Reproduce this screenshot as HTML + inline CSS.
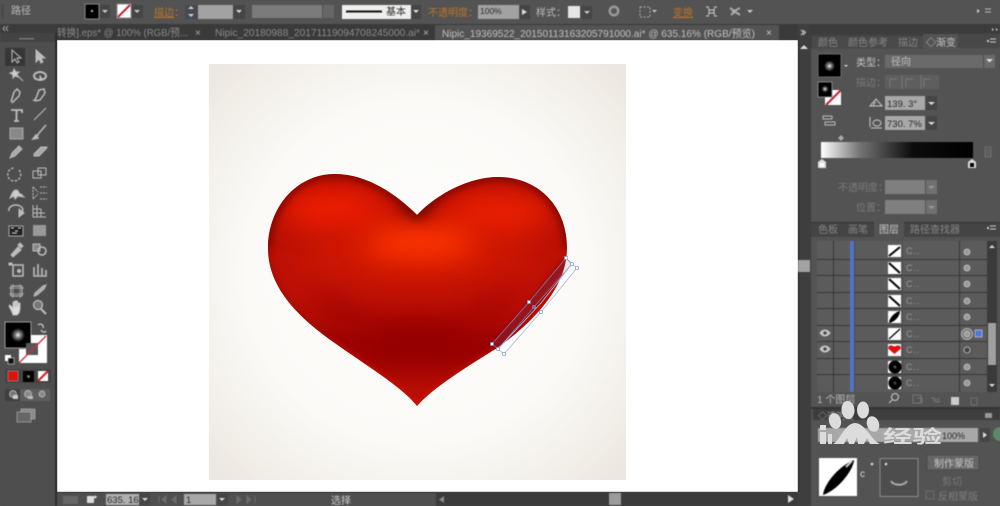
<!DOCTYPE html>
<html><head><meta charset="utf-8"><style>
html,body{margin:0;padding:0;background:#535353;width:1000px;height:506px;overflow:hidden}
svg{display:block}
text{font-family:"Liberation Sans","Noto Sans CJK SC",sans-serif;font-size:10px}
.o{fill:#bd7428}.d{fill:#7a7a7a}.m{fill:#2a2a2a}.l{fill:#bcbcbc}
</style></head><body>
<svg width="1000" height="506" viewBox="0 0 1000 506" xmlns="http://www.w3.org/2000/svg">
<defs>
<radialGradient id="bg" gradientUnits="userSpaceOnUse" cx="417" cy="272" r="285"><stop offset="0" stop-color="#fffefd"/><stop offset=".6" stop-color="#fbfaf7"/><stop offset=".85" stop-color="#f2efe9"/><stop offset="1" stop-color="#ece7e0"/></radialGradient>
<radialGradient id="dot"><stop offset="0" stop-color="#fff"/><stop offset=".35" stop-color="#888"/><stop offset="1" stop-color="#000"/></radialGradient>
<linearGradient id="gbar"><stop offset="0" stop-color="#fff"/><stop offset=".25" stop-color="#777"/><stop offset=".6" stop-color="#0c0c0c"/><stop offset="1" stop-color="#000"/></linearGradient>
<filter id="b3" x="-50%" y="-50%" width="200%" height="200%" color-interpolation-filters="sRGB"><feGaussianBlur stdDeviation="3"/></filter>
<filter id="b4" x="-50%" y="-50%" width="200%" height="200%" color-interpolation-filters="sRGB"><feGaussianBlur stdDeviation="4"/></filter>
<filter id="b8" x="-50%" y="-50%" width="200%" height="200%" color-interpolation-filters="sRGB"><feGaussianBlur stdDeviation="8"/></filter>
<filter id="b14" x="-60%" y="-80%" width="220%" height="260%" color-interpolation-filters="sRGB"><feGaussianBlur stdDeviation="14"/></filter>
<filter id="b22" x="-60%" y="-100%" width="220%" height="300%" color-interpolation-filters="sRGB"><feGaussianBlur stdDeviation="22"/></filter>
<filter id="s" x="0" y="0" width="100%" height="100%" color-interpolation-filters="sRGB"><feGaussianBlur stdDeviation=".55"/></filter>
<clipPath id="hc"><path d="M417,215 C395,193 366,174 335,174 C296,174 268,208 268,248 C268,287 297,316 332,341 C367,366 402,387 417,406 C431,390 458,372 497,348 C525,328 567,292 567,248 C567,206 538,177 498,177 C470,177 438,193 417,215 Z"/></clipPath>
</defs>

<!-- canvas -->
<rect x="57" y="40" width="741" height="452" fill="#fff"/>
<rect x="209" y="64" width="417" height="416" fill="url(#bg)"/>

<!-- heart -->
<g clip-path="url(#hc)">
<rect x="260" y="165" width="315" height="250" fill="#bc1006"/>
<ellipse cx="417" cy="345" rx="115" ry="30" fill="#960000" filter="url(#b14)"/>
<ellipse cx="340" cy="312" rx="38" ry="14" fill="#a40602" filter="url(#b14)" transform="rotate(35 340 312)"/>
<ellipse cx="492" cy="306" rx="34" ry="14" fill="#a80602" filter="url(#b14)" transform="rotate(-35 492 306)"/>
<ellipse cx="417" cy="252" rx="120" ry="24" fill="#da1c00" filter="url(#b22)"/>
<ellipse cx="332" cy="208" rx="52" ry="17" fill="#f42000" filter="url(#b14)"/>
<ellipse cx="500" cy="212" rx="52" ry="17" fill="#f02200" filter="url(#b14)"/>
<ellipse cx="420" cy="242" rx="56" ry="17" fill="#ff3600" filter="url(#b14)"/>
<path d="M417,215 C395,193 366,174 335,174 C296,174 268,208 268,248" fill="none" stroke="#780700" stroke-width="7" filter="url(#b4)"/>
<path d="M417,215 C438,193 470,177 498,177 C538,177 567,206 567,248" fill="none" stroke="#780700" stroke-width="7" filter="url(#b4)"/>
<ellipse cx="417" cy="205" rx="15" ry="13" fill="#800a00" filter="url(#b8)"/>
<path d="M268,248 C268,287 297,316 332,341" fill="none" stroke="#960e04" stroke-width="4" filter="url(#b3)"/>
<path d="M332,341 C367,366 402,387 417,406 C431,390 458,372 497,348" fill="none" stroke="#dc1404" stroke-width="3" filter="url(#b3)" opacity=".7"/>
<path d="M497,352 C525,335 552,305 567,265 L572,300 L510,365 Z" fill="#ee0000" filter="url(#b3)"/>
<path d="M495,347 C520,322 535,300 566,262" fill="none" stroke="#8e0000" stroke-width="6" filter="url(#b3)"/>
</g>
<!-- selection -->
<path d="M566,258 L529,302 L492,344 L498,349 L534,307 L572,264 Z" fill="#8080b8" fill-opacity=".14" stroke="#7478b0" stroke-width=".8"/>
<g fill="none" stroke="#a9bedd" stroke-width=".9">
<path d="M572,264 L577,268 L541,312 L504,354 L498,349"/>
<path d="M572,264 L541,303 L498,349"/>
</g>
<g fill="#fff" stroke="#7f94c0" stroke-width=".7">
<rect x="564.500" y="256.500" width="3" height="3"/><rect x="490.500" y="342.500" width="3" height="3"/><rect x="527.500" y="300.500" width="3" height="3"/>
<circle cx="572" cy="264" r="1.700"/><circle cx="577" cy="268" r="1.700"/><circle cx="541" cy="312" r="1.700"/><circle cx="504" cy="354" r="1.700"/><circle cx="498" cy="349" r="1.700"/><circle cx="534" cy="307" r="1.500" fill="#c0507a"/>
</g>

<g filter="url(#s)">
<!-- top bar -->
<rect x="0" y="0" width="1000" height="24" fill="#535353"/>
<rect x="2" y="4" width="1" height="15" fill="#3f3f3f"/>
<text x="11" y="14" class="l">路径</text>
<rect x="85" y="4" width="14" height="15" fill="#000" stroke="#8a8a8a"/><rect x="91" y="10" width="2" height="2" fill="#bbb"/>
<rect x="100" y="5" width="10" height="13" fill="#454545"/><path d="M102,10h6l-3,3z" fill="#ccc"/>
<rect x="117" y="4" width="14" height="14" fill="#fff" stroke="#8a8a8a"/><path d="M118,17L130,5" stroke="#c02030" stroke-width="2"/>
<rect x="132" y="5" width="11" height="13" fill="#454545"/><path d="M134,10h6l-3,3z" fill="#ccc"/>
<text x="154" y="16" class="o" style="text-decoration:underline">描边</text><text x="174" y="16" class="o">：</text>
<rect x="185" y="5" width="13" height="14" fill="#454a50"/><path d="M188,9h6l-3,-3zM188,14h6l-3,3z" fill="#ccc"/>
<rect x="198" y="5" width="35" height="14" fill="#a2a2a2"/><rect x="233" y="5" width="12" height="14" fill="#454545"/><path d="M236,10h6l-3,3z" fill="#ddd"/>
<rect x="252" y="5" width="70" height="13" fill="#7b7b7b"/><rect x="323" y="5" width="11" height="13" fill="#666"/>
<rect x="342" y="5" width="75" height="14" fill="#eeeeec"/><rect x="346" y="10.500" width="36" height="2" fill="#111"/><text x="386" y="15" class="m">基本</text>
<rect x="411" y="5" width="10" height="14" fill="#454545"/><path d="M413,10h6l-3,3z" fill="#ddd"/>
<text x="428" y="16" class="o">不透明度：</text>
<rect x="478" y="5" width="41" height="14" fill="#a2a2a2"/><text x="480" y="14" class="m" style="font-size:8.500px">100%</text>
<rect x="520" y="5" width="10" height="14" fill="#454545"/><path d="M522,9l5,3l-5,3z" fill="#ddd"/>
<text x="536" y="16" class="l">样式：</text>
<rect x="568" y="6" width="12" height="12" fill="#e6e6e6"/><rect x="581" y="6" width="11" height="13" fill="#454545"/><path d="M584,11h6l-3,3z" fill="#ccc"/>
<circle cx="614" cy="11" r="5.500" fill="#999"/><circle cx="614" cy="11" r="3" fill="#555"/>
<rect x="640" y="7" width="10" height="10" fill="none" stroke="#aaa" stroke-dasharray="2 1.500"/><path d="M652,10h5l-2.500,2.500z" fill="#ccc"/>
<text x="673" y="16" class="o" style="text-decoration:underline">变换</text>
<path d="M706,7h3M714,7h3M706,16h3M714,16h3M708,8l1.500,2M715,8l-1.500,2M708,15l1.500,-2M715,15l-1.500,-2M709,10h5v3h-5z" stroke="#ccc" fill="none"/>
<path d="M730,8l10,7M740,8l-8,4M731,15l4,-3" stroke="#aaa" stroke-width="2" fill="none"/><path d="M747,10h6l-3,3z" fill="#ccc"/>
<path d="M985,9h6M985,12h6" stroke="#bbb" fill="none"/><path d="M977,9l3,2l-3,2z" fill="#ccc"/>

<!-- tab bar -->
<rect x="0" y="24" width="57" height="9" fill="#3c3c3c"/>
<path d="M5,26l-2,2.500l2,2.500M8,26l-2,2.500l2,2.500" stroke="#aaa" fill="none"/>
<rect x="57" y="24" width="741" height="16" fill="#3a3a3a"/>
<text x="57" y="36" fill="#8a8a8a" textLength="131" lengthAdjust="spacingAndGlyphs" style="font-size:10.500px">转换].eps* @ 100% (RGB/预...</text>
<text x="195" y="36" fill="#aaa">×</text>
<text x="215" y="36" fill="#8a8a8a" textLength="205" lengthAdjust="spacingAndGlyphs" style="font-size:10.500px">Nipic_20180988_20171119094708245000.ai*</text>
<text x="423" y="36" fill="#bbb">×</text>
<rect x="435" y="25" width="344" height="15" fill="#535353"/>
<text x="442" y="37" fill="#c0c0c0" textLength="313" lengthAdjust="spacingAndGlyphs" style="font-size:10.500px">Nipic_19369522_20150113163205791000.ai* @ 635.16% (RGB/预览)</text>
<text x="766" y="36" fill="#ccc">×</text>
<path d="M798,29l2,2.500l-2,2.500M801,29l2,2.500l-2,2.500" stroke="#bbb" fill="none"/>

<!-- left tools -->
<rect x="0" y="33" width="55" height="473" fill="#4e4e4e"/>
<rect x="55" y="33" width="2" height="473" fill="#2c2c2c"/>
<rect x="0" y="33" width="55" height="9" fill="#434343"/>
<rect x="19" y="38" width="15" height="1.500" fill="#777"/>
<rect x="5" y="48" width="20" height="18" fill="#363636"/>
<g fill="#bdbdbd" stroke="#bdbdbd" stroke-width="1">
<path d="M12,50v12l3,-3l2,4l2,-1l-2,-4h4z" fill="none"/>
<path d="M36,50v12l3,-3l2,4l2,-1l-2,-4h4z"/>
<path d="M10,73l3,-1l1,-3l2,3l3,0l-2,2l1,3l-3,-1l-2,2l0,-3zM17,75l6,6" fill="#ccc"/>
<ellipse cx="40" cy="76" rx="6" ry="4" fill="none" stroke-width="2"/><path d="M40,76l3,4l-3,0z"/>
<path d="M11,102l3,-10l3,-3l3,3l-1,4l-7,7" fill="none" stroke-width="1.500"/>
<path d="M33,100c2,2 4,-4 6,-10l5,-1l1,4l-5,7l-5,1" fill="none" stroke-width="1.500"/>
<path d="M11,110h11v3M16.500,110v11M14,121h5" fill="none" stroke-width="1.800"/>
<path d="M34,120l12,-12" fill="none"/>
<rect x="10" y="128" width="13" height="11" fill="#888" stroke="#aaa"/>
<path d="M34,138c3,-1 4,-3 5,-5l7,-8M33,139l5,-1l-2,-3z" stroke-width="1.500" fill="none"/>
<path d="M10,158l2,-5l7,-7l3,3l-7,7z" fill="#aaa"/>
<path d="M34,154l7,-7h6l-1,2l-7,7h-5z" fill="#aaa"/>
<path d="M19,170a6.500,6.500 0 1 1 -4,-2" fill="none" stroke-dasharray="2.500 1.500" stroke-width="1.300"/>
<rect x="33" y="171" width="8" height="7" fill="none"/><rect x="38" y="168" width="8" height="7" fill="none"/>
<path d="M10,198c2,-4 3,-8 6,-8c4,0 2,5 5,4l3,3l-6,-1l-3,3l-1,-3z" fill="#ccc"/>
<path d="M33,187v12M33,187l5,5M33,199l5,-5M40,187h7M40,193h7M40,199h7" fill="none" stroke-dasharray="2 1"/>
<path d="M9,211a7,5 0 1 1 11,3" fill="none" stroke-width="1.500"/><path d="M19,209v8l5,-4z"/>
<path d="M33,205v12h13M33,209h8M33,213h12M37,205v12M41,209v8" fill="none" stroke-width="1"/>
</g>
<rect x="9" y="226" width="14" height="10" fill="#222" stroke="#aaa"/><path d="M11,228h3M15,231h3M12,233h5M18,228h3" stroke="#ddd" fill="none"/>
<rect x="33" y="225" width="13" height="11" fill="#999"/>
<g fill="#bdbdbd" stroke="#bdbdbd">
<path d="M11,255l7,-8l3,3l-8,7zM18,245l2,-2l3,3l-2,2z"/>
<rect x="33" y="244" width="7" height="7" fill="#888"/><circle cx="42" cy="251" r="4" fill="none" stroke-width="1.500"/>
<rect x="13" y="265" width="10" height="11" fill="none" stroke-width="1.500"/><circle cx="19" cy="271" r="1.500"/><rect x="9" y="263" width="3" height="2"/>
<path d="M34,275v-8M38,275v-11M42,275v-7M46,275v-5M33,276h14" fill="none" stroke-width="1.600"/>
<rect x="11" y="286" width="11" height="10" fill="none"/><path d="M9,288h15M9,294h15M13,284v14M20,284v14" fill="none" stroke-width=".7"/>
<path d="M34,296l1,-3l8,-7l3,-1l-2,4l-7,6z" fill="#aaa"/>
<path d="M12,312l-3,-6l1,-1l3,3v-6h1.500v5v-6h1.500v6v-6h1.500v6l1,-4h1.500v6l-1,4l-2,2h-4z" fill="#ddd"/>
<circle cx="38" cy="305" r="4.500" fill="#777" stroke-width="1.300"/><path d="M41,309l5,5" stroke-width="2"/>
</g>
<rect x="5" y="322" width="26" height="26" fill="#000" stroke="#9a9a9a"/>
<circle cx="18" cy="335" r="7" fill="url(#dot)"/>
<path d="M31,335h16v28h-28v-14h12z" fill="#fff"/>
<rect x="26" y="343" width="12" height="12" fill="#555"/>
<path d="M19,363L46,336" stroke="#c83040" stroke-width="1.300" fill="none"/>
<path d="M38,325c3,-2 6,0 5,3M46,331c-1,2 -4,1 -5,-1" stroke="#ccc" fill="none" stroke-width="1.300"/>
<rect x="5" y="355" width="6" height="6" fill="#fff"/><rect x="8" y="358" width="6" height="6" fill="#111" stroke="#ddd" stroke-width=".6"/>
<rect x="5" y="369" width="46" height="14" fill="#444"/>
<rect x="8" y="371" width="10" height="10" fill="#dc1208" stroke="#aaa" stroke-width=".5"/>
<rect x="23" y="371" width="11" height="11" fill="#000"/><circle cx="28.500" cy="376.500" r="2" fill="url(#dot)"/>
<rect x="38" y="371" width="10" height="10" fill="#fff"/><path d="M38,381l10,-10" stroke="#c82020" stroke-width="2" fill="none"/>
<rect x="5" y="389" width="45" height="12" fill="#5e5e5e"/><rect x="5" y="389" width="15" height="12" fill="#3f3f3f"/>
<circle cx="13" cy="394" r="3.500" fill="#777" stroke="#ccc" stroke-width=".7"/><rect x="13" y="395" width="5" height="4" fill="#ccc"/>
<circle cx="28" cy="394" r="3.500" fill="#888" stroke="#ccc" stroke-width=".7"/><rect x="28" y="396" width="5" height="3" fill="#bbb"/>
<circle cx="42" cy="394" r="3" fill="#888" stroke="#ccc" stroke-width=".7"/>
<rect x="21" y="409" width="14" height="10" fill="#888" stroke="#bbb" stroke-width=".6"/><rect x="17" y="412" width="14" height="10" fill="#666" stroke="#bbb" stroke-width=".6"/>

<!-- bottom bar -->
<rect x="57" y="492" width="741" height="14" fill="#4f4f4f"/>
<rect x="57" y="492" width="741" height="1" fill="#3c3c3c"/>
<rect x="63" y="496" width="15" height="8" fill="#666"/>
<path d="M87,496h7v7h-7zM90,499l5,-3v-1l2,2l-2,2v-1" fill="#ddd"/>
<rect x="106" y="494" width="33" height="11" fill="#b0b0b0"/><text x="107" y="503" class="m" style="font-size:9.500px">635. 16</text>
<rect x="140" y="494" width="10" height="11" fill="#454545"/><path d="M142,498h6l-3,3z" fill="#ddd"/>
<path d="M159,496v7M166,496l-4,3.500l4,3.500zM176,496l-4,3.500l4,3.500zM237,496l4,3.500l-4,3.500zM247,496l4,3.500l-4,3.500zM255,496v7" fill="#6a6a6a" stroke="#6a6a6a"/>
<rect x="184" y="494" width="32" height="11" fill="#a8a8a8"/><text x="186" y="503" class="m" style="font-size:9.500px">1</text>
<rect x="217" y="494" width="11" height="11" fill="#454545"/><path d="M219,498h6l-3,3z" fill="#ddd"/>
<text x="331" y="504" fill="#cccccc">选择</text>
<rect x="436" y="492" width="362" height="14" fill="#3b3b3b"/>
<path d="M444,496l-5,3.500l5,3.500z" fill="#8a8a8a"/>
<rect x="609" y="493" width="12" height="12" fill="#9b9b9b"/>
<path d="M788,495l6,4l-6,4z" fill="#ddd"/>

<!-- right strip -->
<rect x="798" y="24" width="13" height="482" fill="#3e3e3e"/>
<rect x="798" y="40" width="1" height="452" fill="#2c2c2c"/>
<path d="M801,30l2.500,2.500l-2.500,2.500M803,30l2.500,2.500l-2.500,2.500" stroke="#ccc" fill="none"/>
<path d="M800,49l4,-4l4,4z" fill="#ddd"/>
<rect x="798" y="260" width="12" height="12" fill="#a2a2a2"/>

<!-- gradient panel -->
<rect x="811" y="24" width="189" height="9" fill="#3c3c3c"/>
<path d="M992,28l2,1.500l-2,1.500zM996,28l2,1.500l-2,1.500z" fill="#ccc"/>
<rect x="811" y="33" width="189" height="16" fill="#3f3f3f"/>
<rect x="923" y="34" width="77" height="15" fill="#484848"/>
<rect x="811" y="48" width="189" height="174" fill="#535353"/>
<rect x="812" y="36" width="111" height="13" fill="#4a4a4a"/>
<rect x="923" y="34" width="35" height="15" fill="#535353"/>
<text x="818" y="46" fill="#858585">颜色</text><text x="848" y="46" fill="#858585">颜色参考</text><text x="898" y="46" fill="#858585">描边</text>
<text x="926" y="46" fill="#c4c4c4">◇渐变</text>
<path d="M990,39h6M990,42h6" stroke="#ccc" fill="none"/><rect x="987" y="40" width="2" height="2" fill="#ccc"/>
<rect x="818" y="54" width="23" height="23" fill="#000" stroke="#6a6a6a"/><circle cx="829.500" cy="66" r="5.500" fill="url(#dot)"/>
<path d="M844,65h4l-2,2z" fill="#ddd"/>
<rect x="825" y="90" width="16" height="15" fill="#fff"/><path d="M826,105l15,-15" stroke="#c02030" stroke-width="2" fill="none"/>
<rect x="818" y="82" width="14" height="15" fill="#000" stroke="#999" stroke-width=".8"/><circle cx="825" cy="89" r="3.500" fill="url(#dot)"/>
<path d="M823,116h9v3h-9zM825,122h10v3h-10z" fill="none" stroke="#bbb"/>
<text x="856" y="66" fill="#c4c4c4">类型：</text>
<rect x="885" y="55" width="110" height="13" fill="#6a6a6a"/><text x="891" y="65" fill="#c0c0c0">径向</text>
<rect x="983" y="55" width="1" height="13" fill="#4a4a4a"/><path d="M986,59h7l-3.500,3.500z" fill="#ddd"/>
<text x="856" y="86" class="d">描边：</text>
<rect x="885" y="75" width="54" height="14" fill="#5e5e5e"/><path d="M890,87v-8h7M906,87v-8h7M924,87v-8h7M902,75v14M921,75v14" stroke="#7a7a7a" fill="none"/>
<path d="M870,106h12l-6,-7zM874,106a3,3 0 0 1 2,-4" fill="none" stroke="#ccc"/>
<rect x="885" y="96" width="40" height="14" fill="#a8a8a8"/><text x="887" y="107" class="m" style="font-size:9.500px">139. 3°</text>
<rect x="926" y="96" width="11" height="14" fill="#454545"/><path d="M928,102h7l-3.500,3z" fill="#ddd"/>
<path d="M870,117v10M873,123a4,3 0 1 1 8,0a4,3 0 1 1 -8,0M871,128h11" fill="none" stroke="#ccc"/>
<rect x="885" y="116" width="40" height="14" fill="#a8a8a8"/><text x="887" y="127" class="m" style="font-size:9.500px">730. 7%</text>
<rect x="926" y="116" width="11" height="14" fill="#454545"/><path d="M928,122h7l-3.500,3z" fill="#ddd"/>
<path d="M841,135l3,3l-3,3l-3,-3z" fill="#aaa"/>
<rect x="821" y="142" width="152" height="16" fill="url(#gbar)"/>
<path d="M822,159l4,3v6h-8v-6z" fill="#ddd"/><rect x="820" y="163" width="4" height="4" fill="#fff"/>
<path d="M972,159l4,3v6h-8v-6z" fill="#ddd"/><rect x="970" y="163" width="4" height="4" fill="#000"/>
<path d="M984,147h8M985,148v9h6v-9" stroke="#6f6f6f" fill="#5e5e5e"/>
<text x="838" y="191" class="d">不透明度：</text>
<rect x="885" y="180" width="40" height="14" fill="#7f7f7f"/><rect x="926" y="180" width="11" height="14" fill="#707070"/><path d="M928,186h7l-3.500,3z" fill="#999"/>
<text x="856" y="211" class="d">位置：</text>
<rect x="885" y="200" width="40" height="14" fill="#7f7f7f"/><rect x="926" y="200" width="11" height="14" fill="#707070"/><path d="M928,206h7l-3.500,3z" fill="#999"/>

<!-- layers -->
<rect x="811" y="222" width="189" height="1" fill="#333"/>
<rect x="811" y="223" width="189" height="14" fill="#444"/>
<rect x="874" y="222" width="30" height="15" fill="#535353"/>
<text x="818" y="233" fill="#858585">色板</text><text x="848" y="233" fill="#858585">画笔</text>
<text x="879" y="233" fill="#c8c8c8">图层</text><text x="910" y="233" fill="#858585">路径查找器</text>
<path d="M990,226h6M990,229h6" stroke="#ccc" fill="none"/><rect x="987" y="227" width="2" height="2" fill="#ccc"/>
<rect x="811" y="237" width="189" height="172" fill="#535353"/>
<rect x="817" y="241" width="170" height="151" fill="#5b5b5b"/>
<g fill="#363636">
<rect x="817" y="259" width="170" height="1"/><rect x="817" y="275" width="170" height="1"/><rect x="817" y="292" width="170" height="1"/><rect x="817" y="308" width="170" height="1"/><rect x="817" y="325" width="170" height="1"/><rect x="817" y="341" width="170" height="1"/><rect x="817" y="358" width="170" height="1"/><rect x="817" y="374" width="170" height="1"/>
<rect x="833" y="241" width="1" height="151"/><rect x="854" y="241" width="1" height="151" fill="#4d4d4d"/><rect x="902" y="241" width="1" height="151" fill="#4d4d4d"/><rect x="959" y="241" width="1" height="151"/>
</g>
<rect x="850" y="241" width="4" height="151" fill="#5273c8"/>
<g fill="none">
<rect x="888" y="245" width="13" height="12" fill="#fff"/><path d="M889,256l11,-9" stroke="#000" stroke-width="2"/>
<rect x="888" y="262" width="13" height="12" fill="#fff"/><path d="M889,263l11,10" stroke="#000" stroke-width="2"/>
<rect x="888" y="278" width="13" height="12" fill="#fff"/><path d="M889,279l11,10" stroke="#000" stroke-width="2"/>
<rect x="888" y="295" width="13" height="12" fill="#fff"/><path d="M889,296l11,10" stroke="#000" stroke-width="2"/>
<rect x="888" y="311" width="13" height="12" fill="#fff"/><path d="M889,323c0,-5 6,-11 11,-12c0,5 -5,11 -11,12z" fill="#000"/>
<rect x="888" y="328" width="13" height="12" fill="#fff"/><path d="M889,339l11,-10" stroke="#000" stroke-width="1.300"/>
<rect x="888" y="344" width="13" height="12" fill="#fff"/><path d="M894.500,354l-6,-5c-1,-3 2,-4 3,-3.500l3,1l3,-1c1,-.5 4,.5 3,3.500z" fill="#e01010"/>
<rect x="888" y="361" width="13" height="12" fill="#fff"/><circle cx="895" cy="367" r="6.500" fill="#000"/><circle cx="895" cy="367" r="1.500" fill="#456"/>
<rect x="888" y="377" width="13" height="12" fill="#fff"/><circle cx="895" cy="383" r="6.500" fill="#000"/><circle cx="895" cy="383" r="1.500" fill="#444"/>
</g>
<g fill="#999" style="font-size:9px;letter-spacing:1px">
<text x="906" y="254" style="font-size:9px">C..</text><text x="906" y="271" style="font-size:9px">C..</text><text x="906" y="287" style="font-size:9px">C..</text><text x="906" y="304" style="font-size:9px">C..</text><text x="906" y="320" style="font-size:9px">C..</text><text x="906" y="337" style="font-size:9px">C..</text><text x="906" y="353" style="font-size:9px">C..</text><text x="906" y="370" style="font-size:9px">C..</text><text x="906" y="386" style="font-size:9px">C..</text>
</g>
<g fill="#9a9a9a" stroke="#c8c8c8" stroke-width=".8">
<circle cx="967" cy="252" r="3"/><circle cx="967" cy="268" r="3"/><circle cx="967" cy="284" r="3"/><circle cx="967" cy="301" r="3"/><circle cx="967" cy="317" r="3"/>
<circle cx="967" cy="334" r="5.500" fill="#777"/><circle cx="967" cy="334" r="2.800"/>
<circle cx="967" cy="350" r="3" fill="#444"/><circle cx="967" cy="367" r="3"/><circle cx="967" cy="383" r="3"/>
</g>
<rect x="975" y="330" width="7" height="7" fill="#4c78e0" stroke="#ddd" stroke-width=".6"/>
<path d="M820,333c3,-4 7,-4 10,0c-3,4 -7,4 -10,0zM820,349c3,-4 7,-4 10,0c-3,4 -7,4 -10,0z" fill="#bdbdbd" stroke="#ddd" stroke-width=".7"/>
<circle cx="825" cy="333" r="1.600" fill="#444"/><circle cx="825" cy="349" r="1.600" fill="#444"/>
<rect x="987" y="241" width="10" height="151" fill="#3a3a3a"/>
<rect x="988" y="323" width="8" height="42" fill="#a0a0a0"/>
<path d="M989,248l3,-3l3,3z" fill="#ddd"/><path d="M989,384l3,3l3,-3z" fill="#ddd"/>
<text x="817" y="403" fill="#b8b8b8">1 个图层</text>
<circle cx="895" cy="397" r="3.500" fill="none" stroke="#ccc"/><path d="M892,400l-3,3" stroke="#ccc" fill="none"/>
<path d="M913,395h8v8h-8zM917,398h5v5" stroke="#777" fill="none"/>
<path d="M931,398h3v4M936,398v4h3v-4" stroke="#777" fill="none"/>
<path d="M951,397h8v8h-8z" fill="#ccc"/>
<path d="M970,398h8M971,399v6h6v-6" stroke="#6e6e6e" fill="none"/>

<!-- transparency panel -->
<rect x="811" y="407" width="189" height="99" fill="#535353"/>
<rect x="811" y="407" width="189" height="2" fill="#333"/>
<rect x="813" y="409" width="187" height="11" fill="#3d3d3d"/>
<text x="818" y="419" fill="#a0a0a0" style="font-size:9px">◇透明度</text>
<rect x="985" y="413" width="7" height="5" fill="#999"/>
<rect x="818" y="428" width="160" height="14" fill="#a8a8a8"/>
<text x="942" y="439" class="m" style="font-size:9px">100%</text>
<rect x="980" y="428" width="10" height="14" fill="#454545"/><path d="M983,432l4,3l-4,3z" fill="#ddd"/>
<circle cx="1000" cy="434" r="7" fill="#5c8a68"/>
<rect x="819" y="458" width="38" height="38" fill="#fff"/>
<path d="M823,495c1,-10 14,-28 31,-35c0,8 -14,29 -31,35z" fill="#000"/>
<path d="M846,467l6,-6" stroke="#ccc" stroke-width="2" fill="none"/>
<circle cx="872" cy="464" r="1.300" fill="#ddd"/>
<text x="860" y="477" fill="#d8d8d8" style="font-size:10px">c</text>
<rect x="880" y="458.500" width="38" height="38" fill="#4d4d4d" stroke="#8a8a8a"/>
<circle cx="886" cy="464" r="1.300" fill="#ddd"/>
<path d="M891,481c3,5 13,5 16,0" stroke="#aaa" stroke-width="2" fill="none"/>
<rect x="927" y="455" width="52" height="15" fill="#666" stroke="#4a4a4a"/>
<text x="934" y="467" fill="#c8c8c8">制作蒙版</text>
<text x="942" y="485" fill="#777">剪切</text>
<rect x="926" y="491" width="8" height="8" fill="#555" stroke="#6a6a6a"/>
<text x="938" y="500" fill="#7e7e7e">反相蒙版</text>
</g>

<!-- watermark -->
<g fill="#dcdcdc">
<ellipse cx="848" cy="410" rx="6.500" ry="9" transform="rotate(-5 848 410)"/>
<ellipse cx="863" cy="410" rx="6" ry="8.500"/>
<ellipse cx="835" cy="421" rx="6" ry="8" transform="rotate(-15 835 421)"/>
<ellipse cx="873" cy="424" rx="6" ry="8" transform="rotate(-20 873 424)"/>
<path d="M833,444c6,-2 12,-21 22,-21c10,0 17,18 25,21h-10l-3,-6l-3,6h-6l-1,-7l-3,7h-5l-2,-6l-3,6z"/>
<rect x="820" y="432" width="6" height="12"/><rect x="820" y="425" width="6" height="5"/>
<rect x="828" y="434" width="4" height="10"/>
<text x="883" y="443" textLength="59" lengthAdjust="spacingAndGlyphs" style="font-size:18px;font-weight:bold;fill:#dcdcdc">经验</text>
</g>
</svg>
</body></html>
